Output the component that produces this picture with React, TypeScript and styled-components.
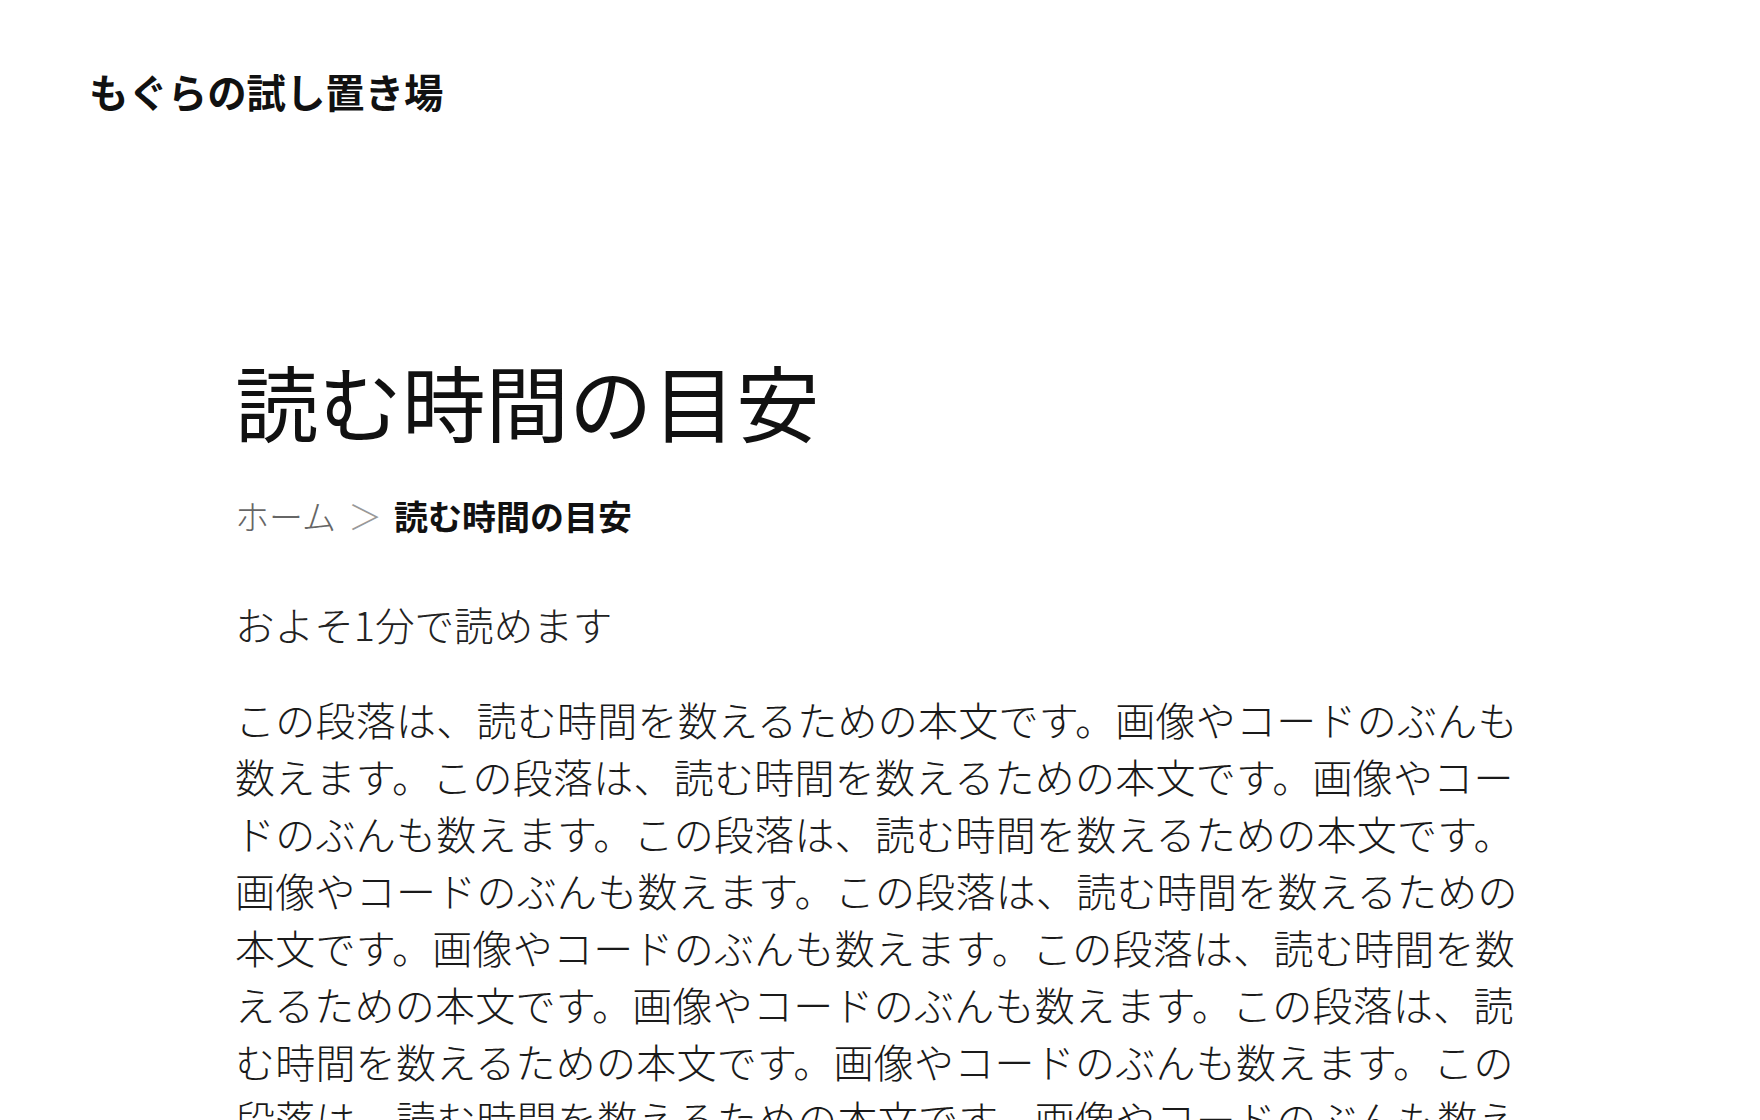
import React from "react";
import styled, { createGlobalStyle } from "styled-components";

const GlobalStyle = createGlobalStyle`
  html, body {
    margin: 0;
    padding: 0;
    background: #ffffff;
  }
  body {
    font-family: "Noto Sans CJK JP", "Noto Sans", sans-serif;
    color: #1a1a1a;
  }
  * { box-sizing: border-box; }
`;

const Page = styled.div`
  display: flex;
  flex-direction: column;
  min-height: 1120px;
`;

const SiteHeader = styled.header`
  padding: 61px 89px 0;
`;

const SiteTitle = styled.a`
  font-size: 39.4px;
  line-height: 60px;
  font-weight: 700;
  color: #111111;
  text-decoration: none;
`;

const Main = styled.main`
  width: 1290px;
  margin: 0 auto;
  padding-top: 229px;
  display: flex;
  flex-direction: column;
`;

const Title = styled.h1`
  margin: 0;
  font-size: 83.5px;
  line-height: 100px;
  font-weight: 400;
  color: #111111;
`;

const Crumbs = styled.nav`
  margin-top: 41px;
  display: flex;
  align-items: center;
  font-size: 34px;
  line-height: 50px;
`;

const CrumbLink = styled.a`
  color: #666666;
  font-weight: 300;
  text-decoration: none;
`;

const CrumbSep = styled.span`
  color: #999999;
  font-weight: 300;
  margin: 0 12px 0 12px;
`;

const CrumbCurrent = styled.span`
  color: #111111;
  font-weight: 700;
`;

const ReadTime = styled.p`
  margin: 54px 0 0;
  font-size: 39.6px;
  line-height: 57px;
  font-weight: 300;
  color: #222222;
`;

const Body = styled.p`
  margin: 39px 0 0;
  font-size: 40px;
  line-height: 57px;
  letter-spacing: 0.25px;
  font-weight: 300;
  color: #1a1a1a;
`;

const sentence = "この段落は、読む時間を数えるための本文です。画像やコードのぶんも数えます。";

export default function App() {
  return (
    <Page>
      <GlobalStyle />
      <SiteHeader>
        <SiteTitle href="#">もぐらの試し置き場</SiteTitle>
      </SiteHeader>
      <Main>
        <Title>読む時間の目安</Title>
        <Crumbs>
          <CrumbLink href="#">ホーム</CrumbLink>
          <CrumbSep>＞</CrumbSep>
          <CrumbCurrent>読む時間の目安</CrumbCurrent>
        </Crumbs>
        <ReadTime>およそ1分で読めます</ReadTime>
        <Body>{sentence.repeat(8)}</Body>
      </Main>
    </Page>
  );
}
